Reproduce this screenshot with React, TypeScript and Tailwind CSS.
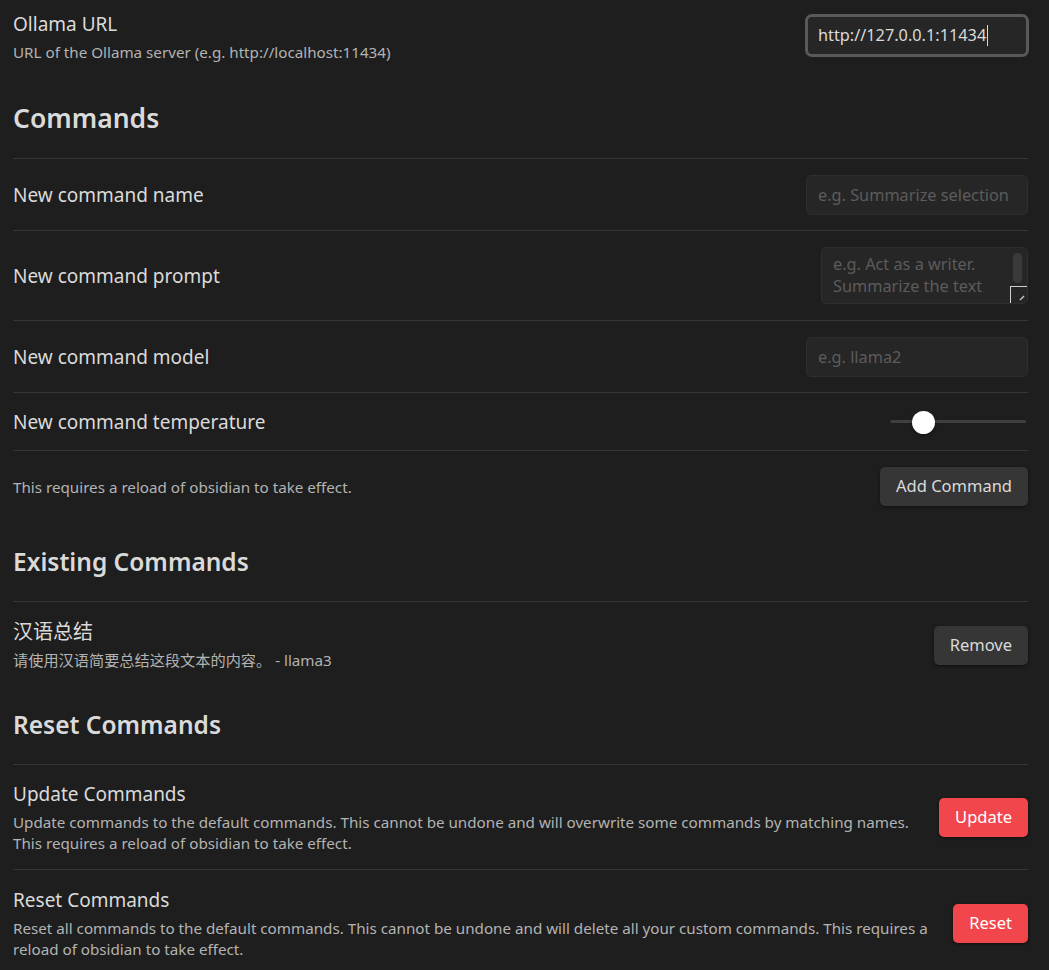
import React from "react";

const font = { fontFamily: '"Noto Sans", "Noto Sans CJK SC", sans-serif' };

function Divider() {
  return <div className="h-px bg-[#363636]" />;
}

function Heading({ children, className = "" }: { children: React.ReactNode; className?: string }) {
  return <h3 className={`font-semibold text-[#dadada] leading-[30px] ${className}`}>{children}</h3>;
}

function Field({ placeholder, width }: { placeholder: string; width: string }) {
  return (
    <input
      placeholder={placeholder}
      className={`${width} h-[40px] rounded-[5px] border border-[#2e2e2e] bg-[#262626] px-[11px] text-[16.3px] text-[#dadada] placeholder:text-[#5c5c5c] outline-none`}
    />
  );
}

function Row({ name, desc, control, className = "" }: { name?: React.ReactNode; desc?: React.ReactNode; control: React.ReactNode; className?: string }) {
  return (
    <div className={`flex items-center justify-between gap-[24px] ${className}`}>
      <div className="flex flex-col">
        {name && <div className="text-[19px] text-[#dadada] leading-[26px]">{name}</div>}
        {desc && <div className="text-[15.2px] text-[#b3b3b3] leading-[21px] mt-[5px]">{desc}</div>}
      </div>
      <div className="shrink-0 flex items-center">{control}</div>
    </div>
  );
}

function Button({ children, danger }: { children: React.ReactNode; danger?: boolean }) {
  return (
    <button
      className={`h-[39px] rounded-[5px] px-[16px] text-[16.5px] shadow-[0_1px_3px_rgba(0,0,0,0.5)] ${
        danger ? "bg-[#f2464d] text-white" : "bg-[#363636] text-[#dadada]"
      }`}
    >
      {children}
    </button>
  );
}

export default function App() {
  return (
    <div className="min-h-[970px] bg-[#1e1e1e] pl-[13px] pr-[21px]" style={font}>
      {/* Ollama URL */}
      <Row
        className="pt-[11px]"
        name="Ollama URL"
        desc="URL of the Ollama server (e.g. http://localhost:11434)"
        control={
          <div className="w-[224px] h-[43px] rounded-[7px] border-[3px] border-[#595959] bg-[#262626] flex items-center px-[10px] text-[16.3px] text-[#dadada] mr-[-1px] mt-[-3px]">
            http://127.0.0.1:11434
            <span className="inline-block w-px h-[21px] bg-[#dadada] ml-px" />
          </div>
        }
      />

      <Heading className="text-[26.5px] pt-[40px] pb-[25px]">Commands</Heading>
      <Divider />

      <Row className="h-[71px]" name="New command name" control={<Field placeholder="e.g. Summarize selection" width="w-[222px]" />} />
      <Divider />

      <Row
        className="h-[89px]"
        name="New command prompt"
        control={
          <div className="relative w-[207px] h-[57px] rounded-[5px] border border-[#2e2e2e] bg-[#262626] overflow-hidden">
            <div className="px-[11px] pt-[5px] text-[16.3px] leading-[22px] text-[#5c5c5c]">
              e.g. Act as a writer.
              <br />
              Summarize the text
            </div>
            <div className="absolute right-[5px] top-[5px] w-[9px] h-[30px] rounded-full bg-[#3a3a3a]" />
            <div className="absolute right-0 bottom-0 w-[17px] h-[17px] border-l border-t border-[#cfcfcf] bg-[#262626]">
              <svg viewBox="0 0 16 16" className="w-full h-full">
                <path d="M9 13 L13 9" stroke="#bbb" strokeWidth="1.6" />
              </svg>
            </div>
          </div>
        }
      />
      <Divider />

      <Row className="h-[71px]" name="New command model" control={<Field placeholder="e.g. llama2" width="w-[222px]" />} />
      <Divider />

      <Row
        className="h-[57px]"
        name="New command temperature"
        control={
          <div className="relative w-[136px] h-[24px] flex items-center mr-[2px]">
            <div className="w-full h-[3px] rounded-full bg-[#3f3f3f]" />
            <div className="absolute left-[22px] top-px w-[23px] h-[23px] rounded-full bg-white shadow-[0_1px_3px_rgba(0,0,0,0.5)]" />
          </div>
        }
      />
      <Divider />

      <Row
        className="pt-[16px] pb-[16px]"
        desc={<span className="relative top-[-2px]">This requires a reload of obsidian to take effect.</span>}
        control={<Button>Add Command</Button>}
      />

      <Heading className="text-[24.5px] pt-[25px] pb-[24px]">Existing Commands</Heading>
      <Divider />

      <Row
        className="pt-[17px]"
        name={<span className="text-[20px]">汉语总结</span>}
        desc="请使用汉语简要总结这段文本的内容。 - llama3"
        control={<Button>Remove</Button>}
      />

      <Heading className="text-[24.5px] pt-[39px] pb-[24px]">Reset Commands</Heading>
      <Divider />

      <Row
        className="pt-[16px] pb-[15px]"
        name="Update Commands"
        desc={
          <>
            Update commands to the default commands. This cannot be undone and will overwrite some commands by matching names.
            <br />
            This requires a reload of obsidian to take effect.
          </>
        }
        control={<Button danger>Update</Button>}
      />
      <Divider />

      <Row
        className="pt-[17px] pb-[10px]"
        name="Reset Commands"
        desc="Reset all commands to the default commands. This cannot be undone and will delete all your custom commands. This requires a reload of obsidian to take effect."
        control={<Button danger>Reset</Button>}
      />
    </div>
  );
}
